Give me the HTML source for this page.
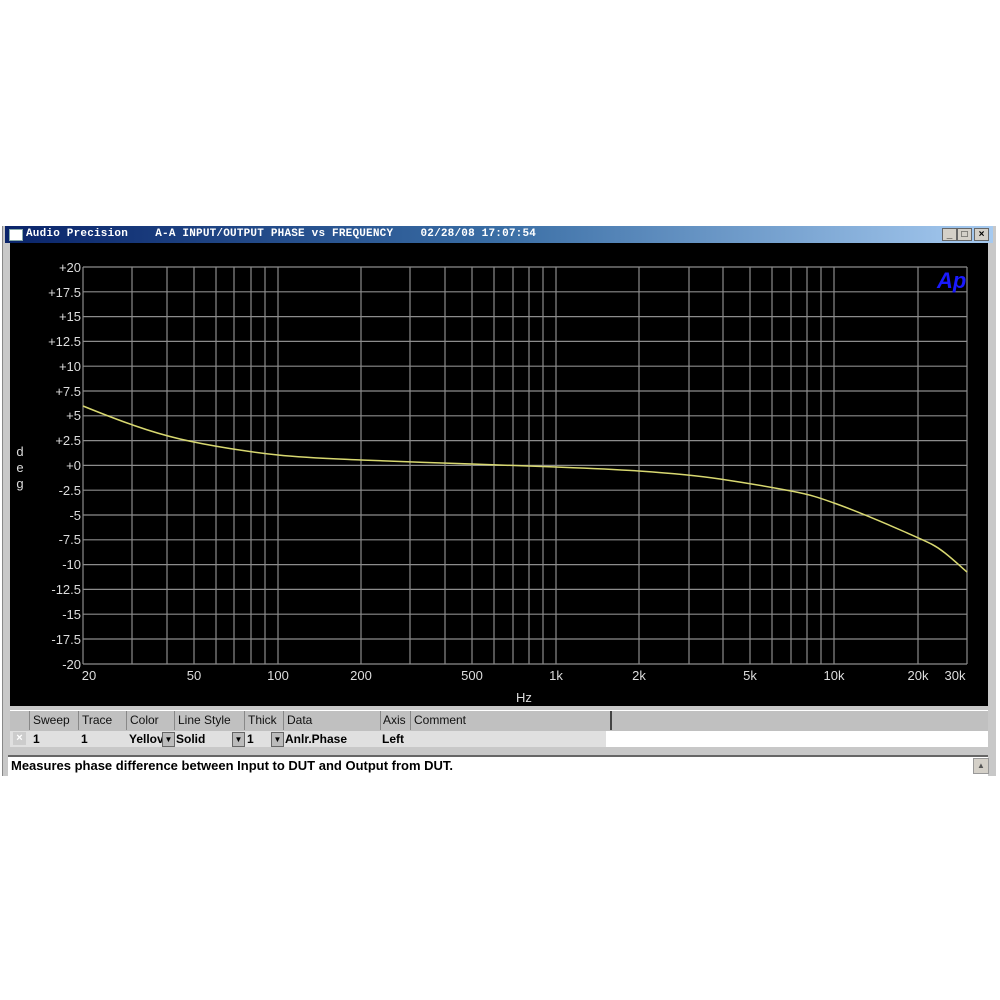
<!DOCTYPE html>
<html><head><meta charset="utf-8"><style>
body{margin:0;width:1000px;height:1000px;background:#fff;position:relative;overflow:hidden;font-family:"Liberation Sans",Arial,sans-serif}
.abs{position:absolute}
</style></head><body>
<div class="abs" style="left:2px;top:226px;width:993px;height:550px;background:#c8c8c8;border-left:1px solid #888"></div>
<div class="abs" style="left:5px;top:226px;width:988px;height:17px;background:linear-gradient(90deg,#0a246a,#3a6ea5 50%,#a6caf0)"></div>
<div class="abs" style="left:9px;top:229px;width:12px;height:10px;background:#fff;border:1px solid #8aa"></div>
<div class="abs" style="left:26px;top:227px;color:#fff;font:bold 11px 'Liberation Mono',monospace;white-space:pre;line-height:15px;letter-spacing:0.2px">Audio Precision    A-A INPUT/OUTPUT PHASE vs FREQUENCY    02/28/08 17:07:54</div>
<div class="abs" style="left:942px;top:228px;width:13px;height:11px;background:#d4d0c8;border:1px solid #666;font:bold 10px sans-serif;text-align:center;line-height:11px">_</div>
<div class="abs" style="left:957px;top:228px;width:13px;height:11px;background:#d4d0c8;border:1px solid #666;font:10px sans-serif;text-align:center;line-height:11px">□</div>
<div class="abs" style="left:974px;top:228px;width:13px;height:11px;background:#d4d0c8;border:1px solid #666;font:bold 10px sans-serif;text-align:center;line-height:11px">×</div>
<svg class="abs" style="left:0;top:0" width="1000" height="1000">
<rect x="10" y="243" width="978" height="463" fill="#000"/>
<g stroke="#8c8c8c" stroke-width="1.2">
<line x1="83" y1="267" x2="967" y2="267"/><line x1="83" y1="291.8" x2="967" y2="291.8"/><line x1="83" y1="316.6" x2="967" y2="316.6"/><line x1="83" y1="341.4" x2="967" y2="341.4"/><line x1="83" y1="366.2" x2="967" y2="366.2"/><line x1="83" y1="391" x2="967" y2="391"/><line x1="83" y1="415.8" x2="967" y2="415.8"/><line x1="83" y1="440.6" x2="967" y2="440.6"/><line x1="83" y1="465.4" x2="967" y2="465.4"/><line x1="83" y1="490.2" x2="967" y2="490.2"/><line x1="83" y1="515" x2="967" y2="515"/><line x1="83" y1="539.8" x2="967" y2="539.8"/><line x1="83" y1="564.6" x2="967" y2="564.6"/><line x1="83" y1="589.4" x2="967" y2="589.4"/><line x1="83" y1="614.2" x2="967" y2="614.2"/><line x1="83" y1="639" x2="967" y2="639"/><line x1="83" y1="664" x2="967" y2="664"/>
<line x1="83" y1="267" x2="83" y2="664"/><line x1="132" y1="267" x2="132" y2="664"/><line x1="167" y1="267" x2="167" y2="664"/><line x1="194" y1="267" x2="194" y2="664"/><line x1="216" y1="267" x2="216" y2="664"/><line x1="234" y1="267" x2="234" y2="664"/><line x1="251" y1="267" x2="251" y2="664"/><line x1="265" y1="267" x2="265" y2="664"/><line x1="278" y1="267" x2="278" y2="664"/><line x1="361" y1="267" x2="361" y2="664"/><line x1="410" y1="267" x2="410" y2="664"/><line x1="445" y1="267" x2="445" y2="664"/><line x1="472" y1="267" x2="472" y2="664"/><line x1="494" y1="267" x2="494" y2="664"/><line x1="513" y1="267" x2="513" y2="664"/><line x1="529" y1="267" x2="529" y2="664"/><line x1="543" y1="267" x2="543" y2="664"/><line x1="556" y1="267" x2="556" y2="664"/><line x1="639" y1="267" x2="639" y2="664"/><line x1="689" y1="267" x2="689" y2="664"/><line x1="723" y1="267" x2="723" y2="664"/><line x1="750" y1="267" x2="750" y2="664"/><line x1="772" y1="267" x2="772" y2="664"/><line x1="791" y1="267" x2="791" y2="664"/><line x1="807" y1="267" x2="807" y2="664"/><line x1="821" y1="267" x2="821" y2="664"/><line x1="834" y1="267" x2="834" y2="664"/><line x1="918" y1="267" x2="918" y2="664"/><line x1="967" y1="267" x2="967" y2="664"/>
</g>
<path fill="none" stroke="#d8d870" stroke-width="1.5" d="M83,406 C120,421 150,432 180,439 S250,452 278,455 S340,459 361,460 S440,463 472,464 S530,466 556,467 S610,469 639,471 S700,476 720,479 S770,487 791,491 S820,498 834,503 S880,521 905,532 S935,545 945,553 S960,566 967,572"/>
<g fill="#ddd" font-family="Liberation Sans" font-size="13" text-anchor="end">
<text x="81" y="272">+20</text><text x="81" y="297">+17.5</text><text x="81" y="321">+15</text><text x="81" y="346">+12.5</text><text x="81" y="371">+10</text><text x="81" y="396">+7.5</text><text x="81" y="420">+5</text><text x="81" y="445">+2.5</text><text x="81" y="470">+0</text><text x="81" y="495">-2.5</text><text x="81" y="520">-5</text><text x="81" y="544">-7.5</text><text x="81" y="569">-10</text><text x="81" y="594">-12.5</text><text x="81" y="619">-15</text><text x="81" y="644">-17.5</text><text x="81" y="669">-20</text>
</g>
<g fill="#ddd" font-family="Liberation Sans" font-size="13" text-anchor="middle">
<text x="89" y="680">20</text><text x="194" y="680">50</text><text x="278" y="680">100</text><text x="361" y="680">200</text><text x="472" y="680">500</text><text x="556" y="680">1k</text><text x="639" y="680">2k</text><text x="750" y="680">5k</text><text x="834" y="680">10k</text><text x="918" y="680">20k</text><text x="955" y="680">30k</text>
<text x="524" y="702">Hz</text><text x="20" y="456">d</text><text x="20" y="472">e</text><text x="20" y="488">g</text>
</g>
<text x="937" y="288" fill="#1a1aff" font-family="Liberation Sans" font-size="22" font-weight="bold" font-style="italic">Ap</text>
</svg>
<div class="abs" style="left:10px;top:710px;width:978px;height:20px;background:#c0c0c0;border-top:1px solid #fff;border-bottom:2px solid #222"></div>
<div class="abs" style="left:10px;top:731px;width:596px;height:16px;background:#e0e0e0"></div>
<div class="abs" style="left:606px;top:731px;width:382px;height:16px;background:#fff"></div>
<div class="abs" style="top:711px;left:0;width:1000px;font-size:12px;color:#111">
<span class="abs" style="left:29px;width:49px;height:19px;border-left:1px solid #888;padding-left:3px;line-height:19px">Sweep</span>
<span class="abs" style="left:78px;width:48px;height:19px;border-left:1px solid #888;padding-left:3px;line-height:19px">Trace</span>
<span class="abs" style="left:126px;width:48px;height:19px;border-left:1px solid #888;padding-left:3px;line-height:19px">Color</span>
<span class="abs" style="left:174px;width:70px;height:19px;border-left:1px solid #888;padding-left:3px;line-height:19px">Line Style</span>
<span class="abs" style="left:244px;width:39px;height:19px;border-left:1px solid #888;padding-left:3px;line-height:19px">Thick</span>
<span class="abs" style="left:283px;width:97px;height:19px;border-left:1px solid #888;padding-left:3px;line-height:19px">Data</span>
<span class="abs" style="left:380px;width:30px;height:19px;border-left:1px solid #888;padding-left:2px;line-height:19px">Axis</span>
<span class="abs" style="left:410px;width:196px;height:19px;border-left:1px solid #888;border-right:2px solid #444;padding-left:3px;line-height:19px">Comment</span>
</div>
<div class="abs" style="top:731px;left:0;width:1000px;font-size:12px;font-weight:bold;color:#000;line-height:16px">
<span class="abs" style="left:13px;top:1px;width:13px;height:13px;background:#ccc;color:#fff;text-align:center;font-size:11px;line-height:13px">×</span>
<span class="abs" style="left:33px">1</span><span class="abs" style="left:81px">1</span>
<span class="abs" style="left:129px">Yellov</span><span class="abs" style="left:162px;top:1px;width:11px;height:13px;background:#bbb;border:1px solid #666;font-size:8px;text-align:center;line-height:13px">▼</span>
<span class="abs" style="left:176px">Solid</span><span class="abs" style="left:232px;top:1px;width:11px;height:13px;background:#bbb;border:1px solid #666;font-size:8px;text-align:center;line-height:13px">▼</span>
<span class="abs" style="left:247px">1</span><span class="abs" style="left:271px;top:1px;width:11px;height:13px;background:#bbb;border:1px solid #666;font-size:8px;text-align:center;line-height:13px">▼</span>
<span class="abs" style="left:285px">Anlr.Phase</span><span class="abs" style="left:382px">Left</span>
</div>
<div class="abs" style="left:8px;top:755px;width:980px;height:20px;background:#fff;border-top:2px solid #666"></div>
<div class="abs" style="left:11px;top:758px;font-size:13px;font-weight:bold;color:#000">Measures phase difference between Input to DUT and Output from DUT.</div>
<div class="abs" style="left:973px;top:758px;width:14px;height:14px;background:#d4d0c8;border:1px solid #999;font-size:8px;text-align:center;line-height:14px;color:#555">▲</div>
</body></html>
